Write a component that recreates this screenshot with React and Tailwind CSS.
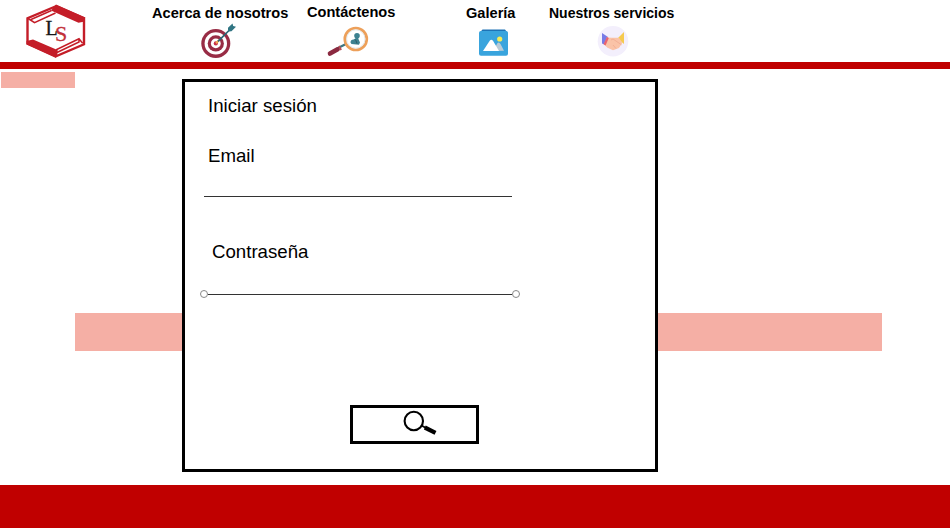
function Logo() {
  return (
    <svg className="mt-[3px] ml-[24px] h-[57px] w-[64px]" viewBox="24 3 64 57" fill="none">
      <path d="M56 6.2 84 18.2V44.3L56 56.3 27.5 43.5V18.2Z" stroke="#c41d28" strokeWidth="2.4" />
      <path d="M56 4.6 85.3 17.5 83.5 21.7 78.5 22.8 51 10.5Z" fill="#c41d28" />
      <path d="M26.5 41 33 39.5 57.5 50 56 58 26.5 44.5Z" fill="#c41d28" />
      <path d="M28 18.5 30.5 20 34.5 22.6 55.5 13M31 19.5 51.5 10.5" stroke="#c41d28" strokeWidth="1.5" />
      <path d="M56.7 56V49.5L79 38.8 82.6 43.3M79 38.8V42L57 52.5" stroke="#c41d28" strokeWidth="1.5" />
      <text x="45.5" y="35" fontFamily="Liberation Serif, serif" fontSize="20" fill="#171717" stroke="#171717" strokeWidth=".3">L</text>
      <text x="55" y="41" fontFamily="Liberation Serif, serif" fontSize="22" fill="#c23039" stroke="#c23039" strokeWidth=".3">S</text>
    </svg>
  );
}

function TargetIcon() {
  return (
    <svg className="h-[38px] w-[40px]" viewBox="199 22 40 38" fill="none">
      <circle cx="215.8" cy="43.4" r="14.5" fill="#982c45" />
      <circle cx="215.8" cy="43.4" r="11.2" fill="#fff" />
      <circle cx="215.8" cy="43.4" r="8.1" fill="#982c45" />
      <circle cx="215.8" cy="43.4" r="4.9" fill="#fff" />
      <circle cx="215.8" cy="43.4" r="2.1" fill="#c8324a" />
      <path d="M216 43.2 219 40.3" stroke="#f0a94e" strokeWidth="2" />
      <path d="M218 41.3 229.5 30" stroke="#2b6675" strokeWidth="1.7" />
      <path d="M228 31.5V27.8L232.5 23.5 233.2 26 236 26.7 231.5 31.3Z" fill="#307583" />
    </svg>
  );
}

function ContactIcon() {
  return (
    <svg className="h-[34px] w-[44px]" viewBox="326 24 44 34" fill="none">
      <path d="M337 48.5 347 43.5" stroke="#3f7580" strokeWidth="2.2" />
      <path d="M330 53.6 337.6 49.3" stroke="#8b2940" strokeWidth="4.6" strokeLinecap="round" />
      <path d="M339 46 341.2 50" stroke="#b84b51" strokeWidth="1.6" />
      <circle cx="355.8" cy="39" r="11" fill="#fff" stroke="#eda05a" strokeWidth="2.7" />
      <circle cx="355.8" cy="39" r="9.2" stroke="#d6dce0" strokeWidth=".7" />
      <circle cx="357" cy="35.8" r="2.8" fill="#3c8190" />
      <path d="M350.5 42.5Q350.5 39.7 353.6 39.6L356 38H358L360 42.6 359 44.8 351.5 44Z" fill="#3c8190" />
      <path d="M355.5 39.5 357 43.5" stroke="#2b5967" />
    </svg>
  );
}

function GalleryIcon() {
  return (
    <svg className="h-[28px] w-[32px]" viewBox="478 28 32 28" fill="none">
      <path d="M482.5 29.5H505L507.8 33H479.5Z" fill="#1e73b5" />
      <rect x="479" y="31" width="29" height="24.8" rx="2" fill="#39a4dd" />
      <path d="M493 51 497.5 43Q499 41.5 500.5 44L504 50.8Z" fill="#b8cbd7" />
      <path d="M483 51 489.7 40.8Q491.3 38.8 493 40.8L499 51Z" fill="#fff" />
      <circle cx="499.7" cy="39" r="2.6" fill="#f8ec55" />
    </svg>
  );
}

function HandshakeIcon() {
  return (
    <svg className="h-[32px] w-[32px]" viewBox="597 25 32 32" fill="none">
      <circle cx="613" cy="41.2" r="15.3" fill="#f3effc" />
      <path d="M602 33 608 37 605.5 45 602 43.5Z" fill="#777be6" />
      <path d="M624 32V44L617.5 38.5Z" fill="#f5ca4f" />
      <path d="M606.8 37.5 612 37.8 619 37.7 622.3 43 619 48 613 50.3 607.5 47.8 604 44.5Z" fill="#fac3a7" />
      <path d="M606.8 37 608.8 38 605.5 45.5 603.5 44.3Z" fill="#e96370" />
      <path d="M611 40 613 39 621.5 44.8M613 45 616 48.5" stroke="#efaa91" strokeWidth=".8" />
    </svg>
  );
}

function SearchGlyph() {
  return (
    <svg className="mt-[2px] ml-[50px] h-[26px] w-[34px]" viewBox="403 410 34 26" fill="none" stroke="#000">
      <circle cx="413.8" cy="421" r="9.2" strokeWidth="2.1" />
      <path d="M421.5 425.5 426 428" strokeWidth="2" />
      <path d="M424.8 427.5 435.5 432.8" strokeWidth="4.2" />
    </svg>
  );
}

export default function App() {
  return (
    <div className="flex h-[528px] w-[950px] flex-col overflow-hidden bg-white font-['Liberation_Sans',Arial,sans-serif] text-black">
      <header className="flex h-[69px] shrink-0 border-b-[7px] border-[#c00000]">
        <div className="w-[152px] shrink-0"><Logo /></div>
        <nav className="flex text-[14.6px] leading-[16px] font-bold whitespace-nowrap">
          <a className="w-[155px] pt-[5px]">Acerca de nosotros<div className="mt-px ml-[47px]"><TargetIcon /></div></a>
          <a className="w-[159px] pt-[4px]">Contáctenos<div className="mt-[4px] ml-[19px]"><ContactIcon /></div></a>
          <a className="w-[83px] pt-[5px]">Galería<div className="mt-[7px] ml-[12px]"><GalleryIcon /></div></a>
          <a className="w-[140px] pt-[5px] text-[14px]">Nuestros servicios<div className="mt-[4px] ml-[48px]"><HandshakeIcon /></div></a>
        </nav>
      </header>

      <main className="flex h-[416px] shrink-0">
        <div className="flex w-[182px] flex-col pt-[3px]">
          <div className="ml-px h-[16px] w-[74px] bg-[#f5afa5]" />
          <div className="mt-[225px] ml-[75px] h-[38px] bg-[#f5afa5]" />
        </div>
        <section className="mt-[10px] h-[393px] w-[476px] border-[3px] border-black text-[18.67px] leading-[22px]">
          <h1 className="mt-[13px] ml-[23px]">Iniciar sesión</h1>
          <label className="mt-[28px] ml-[23px] block">Email</label>
          <div className="mt-[29px] ml-[19px] h-px w-[308px] bg-[#333]" />
          <label className="mt-[44px] ml-[27px] block">Contraseña</label>
          <div className="mt-[27px] ml-[15px] flex w-[320px] items-center">
            <span className="size-[8px] rounded-full border-[1.5px] border-[#888]" />
            <span className="h-px flex-1 bg-[#333]" />
            <span className="size-[8px] rounded-full border-[1.5px] border-[#888]" />
          </div>
          <button className="mt-[107px] ml-[165px] flex h-[39px] w-[129px] items-start border-[3px] border-black"><SearchGlyph /></button>
        </section>
        <div className="mt-[244px] h-[38px] w-[224px] bg-[#f5afa5]" />
      </main>
      <footer className="h-[43px] shrink-0 bg-[#c00000]" />
    </div>
  );
}
